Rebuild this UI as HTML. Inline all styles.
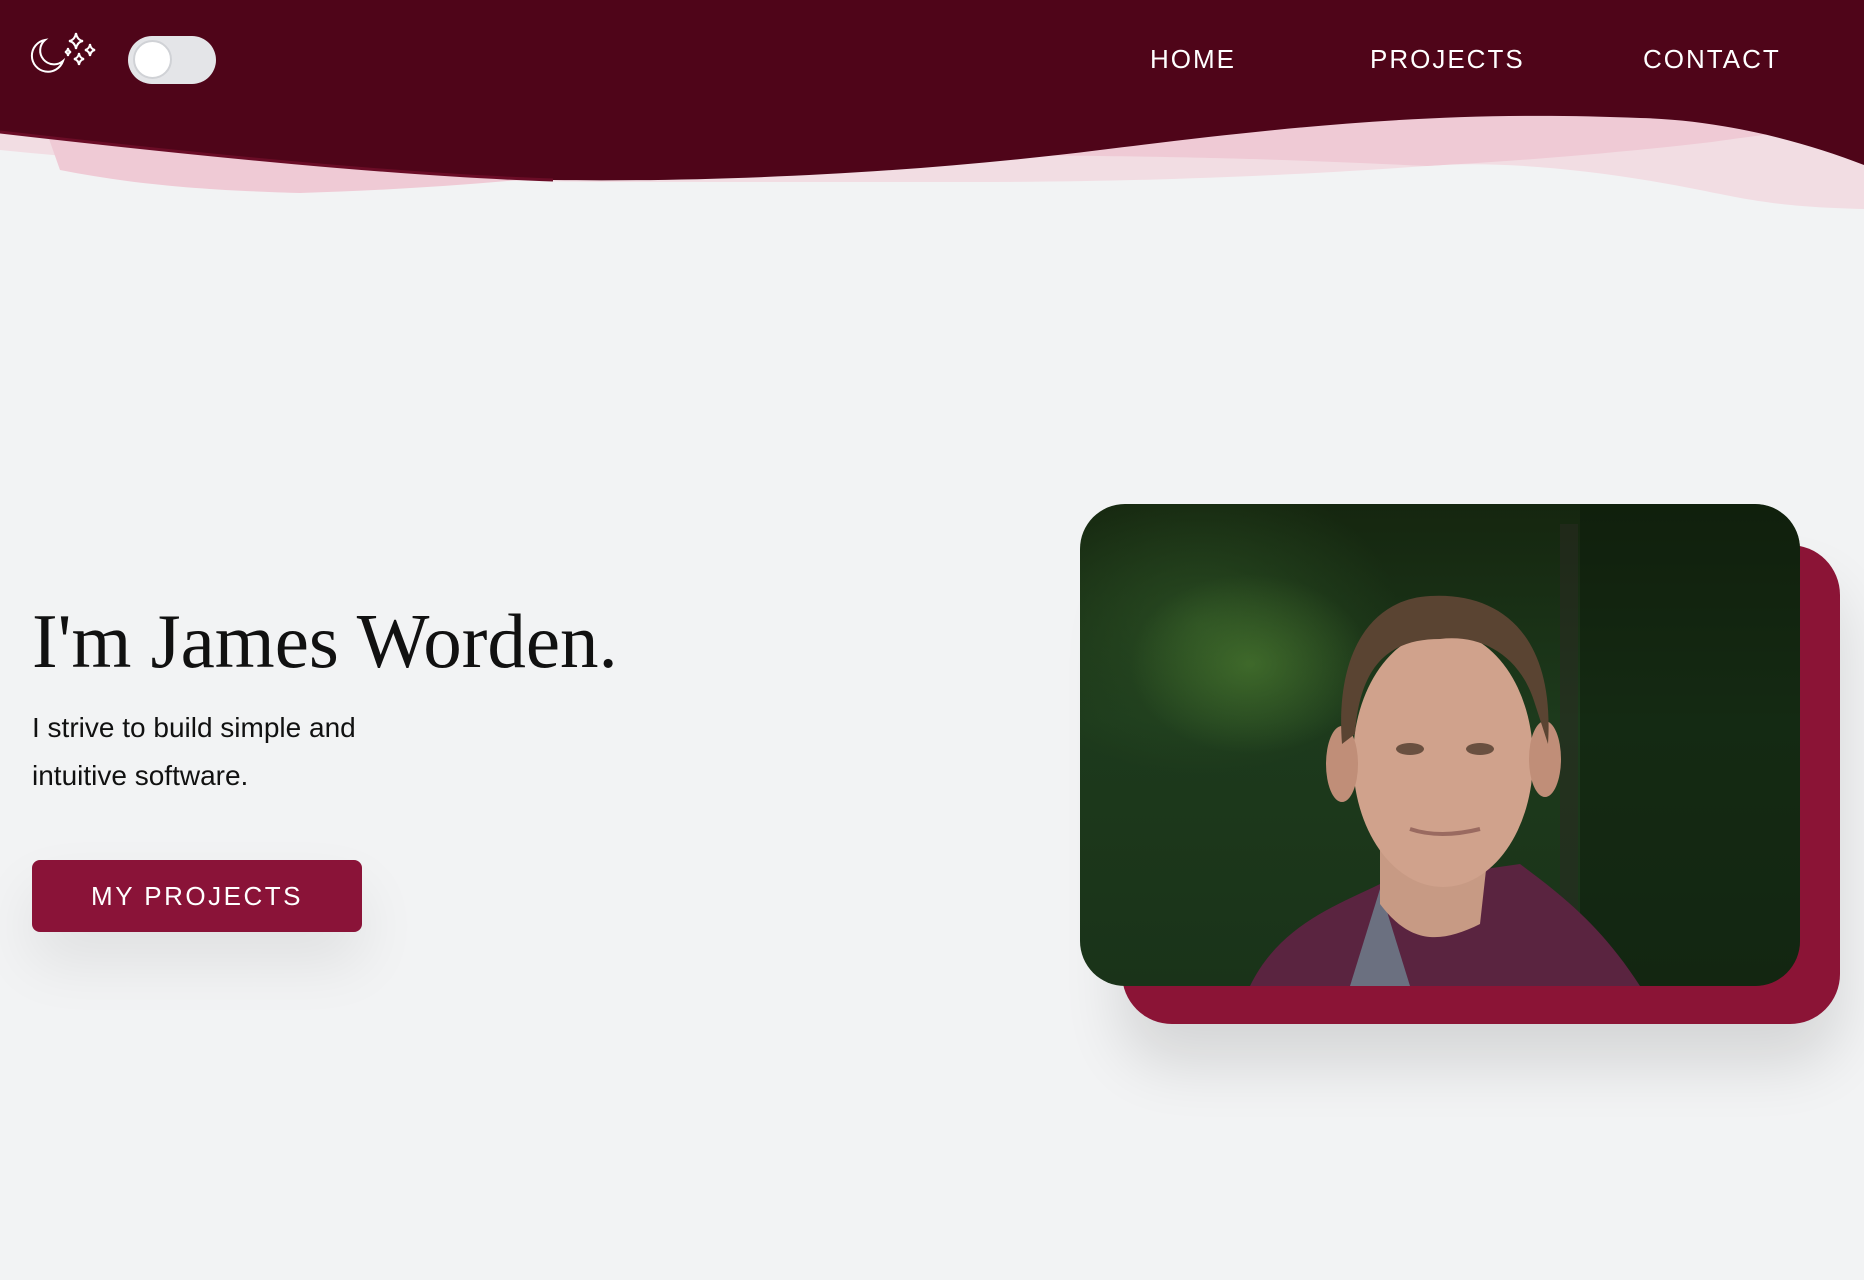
<!DOCTYPE html>
<html><head><meta charset="utf-8"><style>
*{margin:0;padding:0;box-sizing:border-box}
body{width:1864px;height:1280px;background:#f2f3f4;position:relative;overflow:hidden;font-family:"Liberation Sans",sans-serif}
.nav{position:absolute;top:42px;color:#fff;font-size:26px;letter-spacing:2px;line-height:34px}
h1{position:absolute;left:32px;top:596px;font-family:"Liberation Serif",serif;font-weight:normal;font-size:77px;line-height:90px;color:#111;white-space:nowrap}
.sub{position:absolute;left:32px;top:704px;font-size:28px;line-height:48px;color:#111}
.btn{position:absolute;left:32px;top:860px;width:330px;height:72px;background:#8a1338;border-radius:8px;color:#fff;font-size:26px;letter-spacing:2.5px;text-align:center;line-height:72px;box-shadow:0 30px 60px rgba(0,0,0,.08)}
.back{position:absolute;left:1122px;top:545px;width:718px;height:479px;background:#8b1436;border-radius:50px;box-shadow:0 40px 60px rgba(0,0,0,.12)}
.photo{position:absolute;left:1080px;top:504px;width:720px;height:482px;border-radius:45px;overflow:hidden;
background:radial-gradient(ellipse 120px 90px at 170px 160px,rgba(80,130,50,.6),transparent),radial-gradient(ellipse 200px 150px at 120px 120px,rgba(50,90,40,.6),transparent),linear-gradient(180deg,#15260f 0%,#1d3a1c 45%,#1a3319 100%)}
</style></head><body>
<svg style="position:absolute;left:0;top:0" width="1864" height="220">
<path d="M0 0H1864V209C1780 207 1750 200 1700 190 1600 170 1500 160 1427 166 1300 175 1150 182 975 182 800 182 700 182 600 182 400 180 200 170 0 150Z" fill="#f2dde3"/>
<path d="M0 0H1864V125C1800 130 1760 135 1712 142 1600 155 1500 162 1427 166 1300 160 1200 156 975 155 850 156 750 158 600 172 500 183 400 190 300 193 238 191 150 188 60 170 0 150Z" fill="#efcad5"/>
<path d="M0 0H1864V165C1800 140 1720 120 1640 118 1450 110 1300 125 1100 150 900 175 700 182 553 180 400 175 200 155 0 132Z" fill="#4f0519"/>
<path d="M0 132C200 155 400 175 553 180 700 182" stroke="#6a0c26" stroke-width="3" fill="none"/>
</svg>
<svg style="position:absolute;left:30px;top:30px" width="70" height="45" viewBox="0 0 70 45" fill="none" stroke="#fff" stroke-width="2">
<path d="M15 10A16 16 0 1 0 33 31A13 13 0 0 1 15 10Z"/>
<path d="M46 3Q47 10 53 11Q47 12 46 19Q45 12 39 11Q45 10 46 3Z"/>
<path d="M60 14Q60.5 19 65 20Q60.5 21 60 26Q59.5 21 55 20Q59.5 19 60 14Z"/>
<path d="M49 23Q49.5 28 54 29Q49.5 30 49 35Q48.5 30 44 29Q48.5 28 49 23Z"/>
<path d="M38 18Q38.3 21.5 41 22Q38.3 22.5 38 26Q37.7 22.5 35 22Q37.7 21.5 38 18Z"/>
</svg>
<div style="position:absolute;left:128px;top:36px;width:88px;height:48px;border-radius:24px;background:#e4e5e8"></div>
<div style="position:absolute;left:133px;top:40px;width:39px;height:39px;border-radius:50%;background:#fff;border:2px solid #d0d2d6"></div>
<div class="nav" style="left:1150px">HOME</div>
<div class="nav" style="left:1370px">PROJECTS</div>
<div class="nav" style="left:1643px">CONTACT</div>
<h1>I'm James Worden.</h1>
<div class="sub">I strive to build simple and<br>intuitive software.</div>
<div class="btn">MY PROJECTS</div>
<div class="back"></div>
<div class="photo">
<svg width="720" height="482" viewBox="0 0 720 482">
<rect x="500" y="0" width="220" height="482" fill="#0c1a0a" opacity=".5"/>
<rect x="480" y="20" width="18" height="400" fill="#2a2a22" opacity=".5"/>
<path d="M170 482C200 420 260 400 300 380L440 360C480 390 520 420 560 482Z" fill="#5a2440"/>
<path d="M270 482L300 385 330 482Z" fill="#6b7080"/>
<path d="M300 330L300 400C330 440 360 440 400 420L410 330Z" fill="#c79a84"/>
<ellipse cx="363" cy="255" rx="90" ry="128" fill="#d0a28c"/>
<ellipse cx="262" cy="260" rx="16" ry="38" fill="#c08e78"/>
<ellipse cx="465" cy="255" rx="16" ry="38" fill="#c08e78"/>
<path d="M262 240C255 150 290 95 350 92 420 88 475 130 468 240L455 200C440 150 400 130 360 135 310 135 280 160 275 230Z" fill="#5a4432"/>
<ellipse cx="330" cy="245" rx="14" ry="6" fill="#6a5040"/>
<ellipse cx="400" cy="245" rx="14" ry="6" fill="#6a5040"/>
<path d="M330 325Q360 335 400 325" stroke="#9a6a60" stroke-width="4" fill="none"/>
</svg>
</div>
</body></html>
